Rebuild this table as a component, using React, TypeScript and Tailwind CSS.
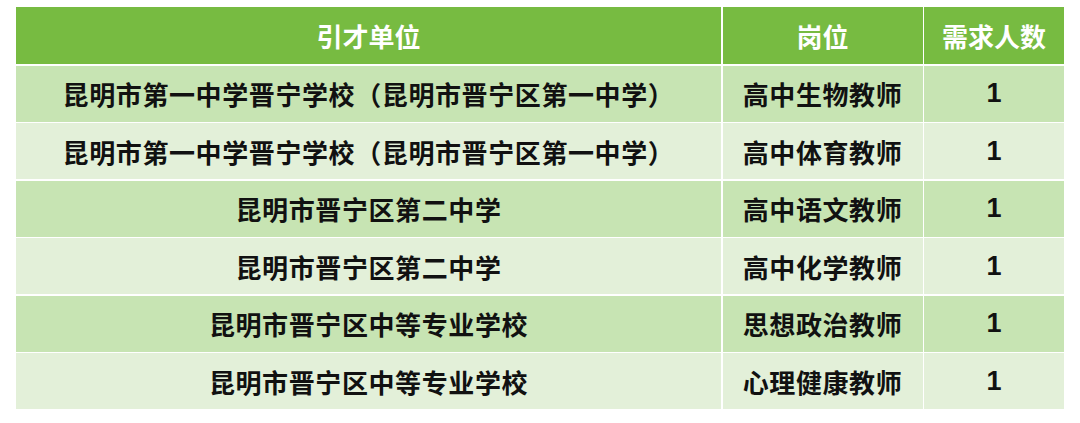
import React from "react";

const rows = [
  ["昆明市第一中学晋宁学校（昆明市晋宁区第一中学）", "高中生物教师", "1"],
  ["昆明市第一中学晋宁学校（昆明市晋宁区第一中学）", "高中体育教师", "1"],
  ["昆明市晋宁区第二中学", "高中语文教师", "1"],
  ["昆明市晋宁区第二中学", "高中化学教师", "1"],
  ["昆明市晋宁区中等专业学校", "思想政治教师", "1"],
  ["昆明市晋宁区中等专业学校", "心理健康教师", "1"],
];

const cjk = { fontFamily: '"Noto Sans CJK SC", "Liberation Sans", sans-serif' };
const num = { fontFamily: '"Liberation Sans", Arial, sans-serif' };

export default function App() {
  return (
    <div className="w-[1080px] h-[423px] bg-white pt-[7px] pl-[16px]" style={cjk}>
      <div className="grid grid-cols-[705px_200px_140px] gap-x-[1.5px] gap-y-[1.5px] w-[1048px] bg-white">
        <div className="h-[57px] bg-[#77bb41] flex items-center justify-center text-white font-bold text-[26px]">引才单位</div>
        <div className="h-[57px] bg-[#77bb41] flex items-center justify-center text-white font-bold text-[26px]">岗位</div>
        <div className="h-[57px] bg-[#77bb41] flex items-center justify-center text-white font-bold text-[26px]">需求人数</div>
        {rows.map((r, i) => {
          const bg = i % 2 === 0 ? "bg-[#c7e4b3]" : "bg-[#e3f0d9]";
          return (
            <React.Fragment key={i}>
              <div className={`h-[56px] ${bg} flex items-center justify-center text-[#111] font-bold text-[26px] tracking-[0.6px]`}>{r[0]}</div>
              <div className={`h-[56px] ${bg} flex items-center justify-center text-[#111] font-bold text-[26px] tracking-[0.6px]`}>{r[1]}</div>
              <div className={`h-[56px] ${bg} flex items-center justify-center text-[#111] font-bold text-[27px]`} style={num}>{r[2]}</div>
            </React.Fragment>
          );
        })}
      </div>
    </div>
  );
}
